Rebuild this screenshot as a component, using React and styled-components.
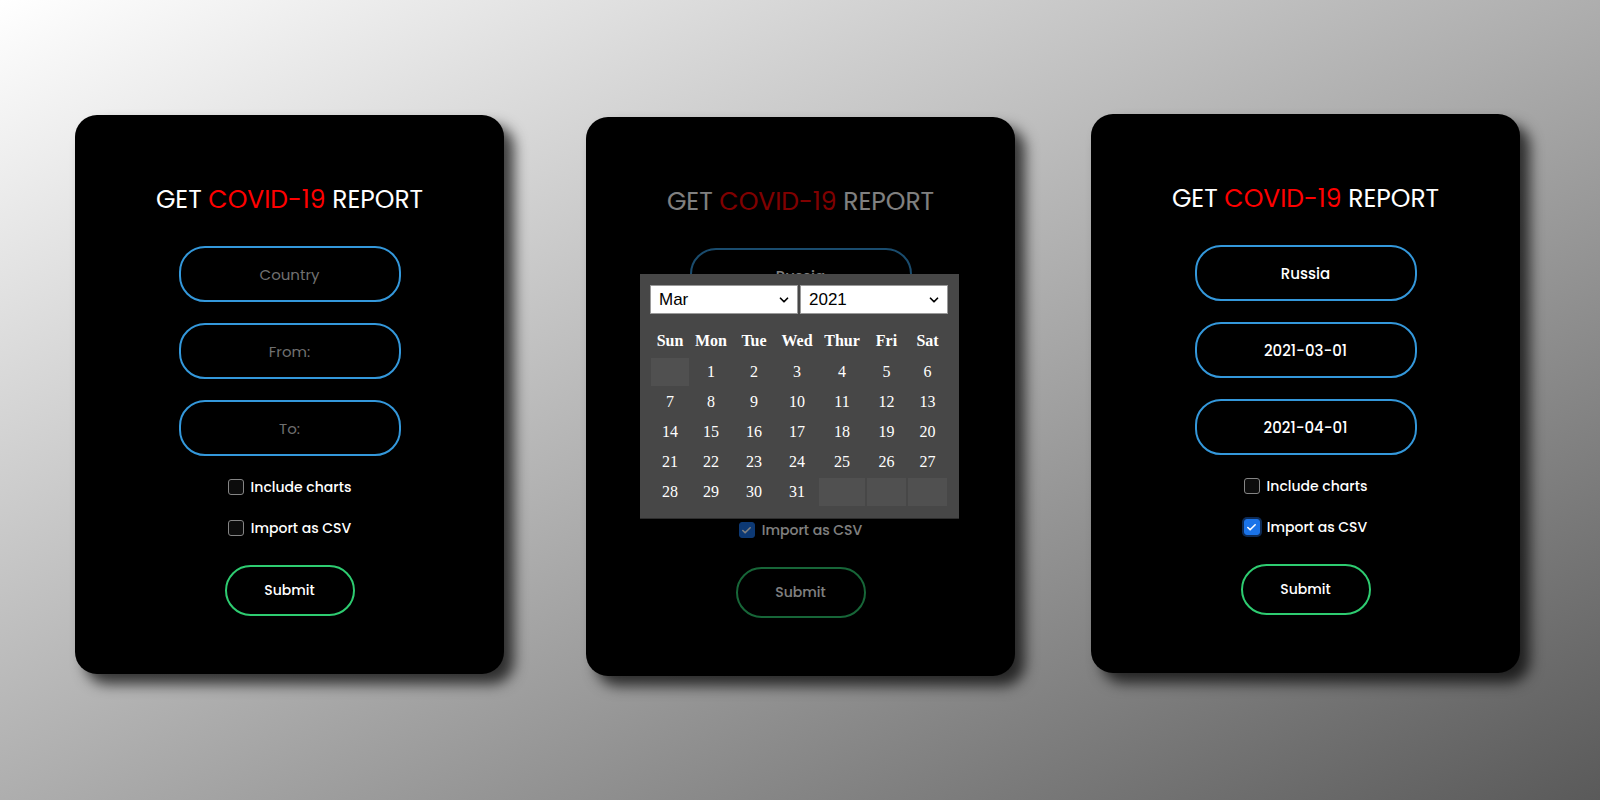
import React from "react";
import styled, { createGlobalStyle } from "styled-components";
import { ChevronDown, Check } from "lucide-react";

const GlobalStyle = createGlobalStyle`
  body {
    margin: 0;
    font-family: "Poppins", "Open Sans", sans-serif;
  }
`;

const Page = styled.div`
  width: 1600px;
  height: 800px;
  overflow: hidden;
  background: linear-gradient(to bottom right, #ffffff 0%, #aeaeae 50%, #5a5a5a 100%);
  display: flex;
  align-items: flex-start;
  padding: 114px 0 0 75px;
  box-sizing: border-box;
`;

const Card = styled.div`
  position: relative;
  width: 429px;
  height: 559px;
  margin-top: ${(p) => p.$top || 0}px;
  margin-left: ${(p) => p.$left || 0}px;
  background: #000;
  border-radius: 22px;
  box-shadow: 10px 10px 14px rgba(0, 0, 0, 0.72);
  box-sizing: border-box;
  padding-top: 70px;
`;

const Form = styled.div`
  display: flex;
  flex-direction: column;
  align-items: center;
  opacity: ${(p) => (p.$dim ? 0.5 : 1)};
`;

const Title = styled.h2`
  margin: 0 0 31px;
  font-size: 25px;
  line-height: 30px;
  font-weight: 400;
  color: #fff;
  white-space: nowrap;
  span {
    color: #ff0000;
  }
`;

const Fields = styled.div`
  display: flex;
  flex-direction: column;
  align-items: center;
  gap: 21px;
`;

const Input = styled.input`
  width: 222px;
  height: 56px;
  box-sizing: border-box;
  background: #000;
  border: 2px solid #3498db;
  border-radius: 26px;
  color: #fff;
  font-family: inherit;
  font-size: 15px;
  font-weight: 500;
  text-align: center;
  outline: none;
  &::placeholder {
    color: #707070;
    font-weight: 400;
  }
`;

const CheckRow = styled.label`
  display: flex;
  align-items: center;
  gap: 7px;
  height: 20px;
  color: #fff;
  font-size: 14px;
  font-weight: 500;
`;

const Box = styled.span`
  width: 16px;
  height: 16px;
  box-sizing: border-box;
  border-radius: 3px;
  display: flex;
  align-items: center;
  justify-content: center;
  background: ${(p) => (p.$checked ? "#1a73e8" : "#0c0c0c")};
  border: 1px solid ${(p) => (p.$checked ? "#1a73e8" : "#858585")};
  box-shadow: ${(p) => (p.$focus ? "0 0 0 2px #0d2b57" : "none")};
  color: #fff;
`;

const Submit = styled.button`
  margin-top: 6px;
  width: 130px;
  height: 51px;
  background: #000;
  border: 2px solid #2ecc71;
  border-radius: 26px;
  color: #fff;
  font-family: inherit;
  font-size: 14px;
  font-weight: 500;
`;

const Popup = styled.div`
  position: absolute;
  left: 54px;
  top: 157px;
  width: 319px;
  box-sizing: border-box;
  padding: 11px 11px 12px 10px;
  background: #474747;
  border-bottom: 1px solid #2e2e2e;
  font-family: "Liberation Serif", serif;
  color: #fff;
`;

const Selects = styled.div`
  display: flex;
  gap: 2px;
  margin-bottom: 12px;
`;

const Select = styled.div`
  width: 148px;
  height: 29px;
  box-sizing: border-box;
  background: #fff;
  border: 1px solid #9a9a9a;
  display: flex;
  align-items: center;
  justify-content: space-between;
  padding: 0 6px 0 8px;
  font-family: "Liberation Sans", Arial, sans-serif;
  font-size: 17px;
  color: #000;
`;

const Grid = styled.div`
  margin-left: 1px;
  display: grid;
  grid-template-columns: 38px 40px 42px 40px 46px 39px 39px;
  grid-auto-rows: 28px;
  grid-template-rows: 30px;
  gap: 2px;
`;

const Head = styled.div`
  display: flex;
  align-items: center;
  justify-content: center;
  font-weight: 700;
  font-size: 16px;
`;

const Day = styled.div`
  display: flex;
  align-items: center;
  justify-content: center;
  font-size: 16px;
  background: ${(p) => (p.$empty ? "#505050" : "transparent")};
`;

const heads = ["Sun", "Mon", "Tue", "Wed", "Thur", "Fri", "Sat"];
const days = [null, ...Array.from({ length: 31 }, (_, i) => i + 1), null, null, null];

function CheckBox({ checked, focus, children }) {
  return (
    <CheckRow>
      <Box $checked={checked} $focus={focus}>
        {checked && <Check size={11} strokeWidth={3.5} />}
      </Box>
      {children}
    </CheckRow>
  );
}

function ReportForm({ dim, country, from, to, csv, focus }) {
  return (
    <Form $dim={dim}>
      <Title>
        GET <span>COVID-19</span> REPORT
      </Title>
      <Fields>
        <Input placeholder="Country" defaultValue={country} />
        <Input placeholder="From:" defaultValue={from} />
        <Input placeholder="To:" defaultValue={to} />
        <CheckBox>Include charts</CheckBox>
        <CheckBox checked={csv} focus={focus}>Import as CSV</CheckBox>
        <Submit>Submit</Submit>
      </Fields>
    </Form>
  );
}

export default function App() {
  return (
    <>
      <GlobalStyle />
      <Page>
        <Card $top={1}>
          <ReportForm />
        </Card>
        <Card $top={3} $left={82}>
          <ReportForm dim country="Russia" from="2021-03-01" csv />
          <Popup>
            <Selects>
              <Select>
                Mar <ChevronDown size={14} strokeWidth={3} />
              </Select>
              <Select>
                2021 <ChevronDown size={14} strokeWidth={3} />
              </Select>
            </Selects>
            <Grid>
              {heads.map((h) => (
                <Head key={h}>{h}</Head>
              ))}
              {days.map((d, i) => (
                <Day key={i} $empty={d === null}>
                  {d}
                </Day>
              ))}
            </Grid>
          </Popup>
        </Card>
        <Card $left={76}>
          <ReportForm country="Russia" from="2021-03-01" to="2021-04-01" csv focus />
        </Card>
      </Page>
    </>
  );
}
